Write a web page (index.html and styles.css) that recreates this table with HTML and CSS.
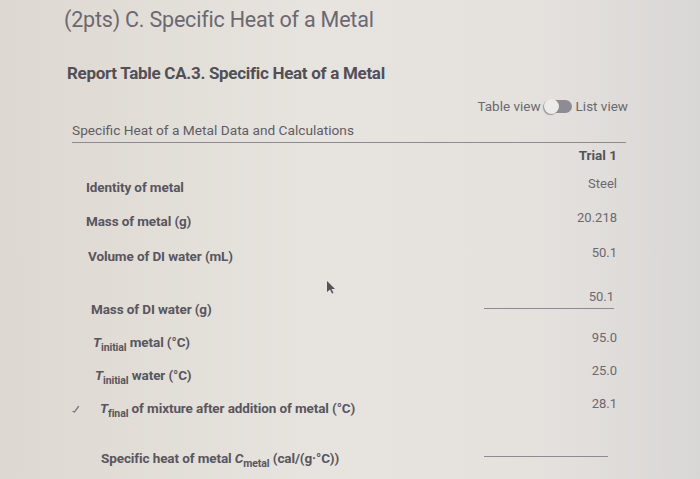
FILE: index.html
```html
<!DOCTYPE html>
<html>
<head>
<meta charset="utf-8">
<link rel="stylesheet" href="styles.css">
</head>
<body>
<div class="page">
  <h1 class="title">(2pts) C. Specific Heat of a Metal</h1>
  <h2 class="report">Report Table CA.3. Specific Heat of a Metal</h2>
  <div class="viewbar">
    <span>Table view</span>
    <span class="toggle"><span class="knob"></span></span>
    <span>List view</span>
  </div>
  <div class="section">
    <div class="caption">Specific Heat of a Metal Data and Calculations</div>
    <div class="head-row"><span class="trial">Trial 1</span></div>
    <div class="row r1"><span class="label">Identity of metal</span><span class="value">Steel</span></div>
    <div class="row r2"><span class="label">Mass of metal (g)</span><span class="value">20.218</span></div>
    <div class="row r3"><span class="label">Volume of DI water (mL)</span><span class="value">50.1</span></div>
    <div class="row r4"><span class="label">Mass of DI water (g)</span><span class="value input">50.1</span></div>
    <div class="row r5"><span class="label"><i>T</i><sub>initial</sub> metal (°C)</span><span class="value">95.0</span></div>
    <div class="row r6"><span class="label"><i>T</i><sub>initial</sub> water (°C)</span><span class="value">25.0</span></div>
    <div class="row r7"><span class="check"><svg width="8" height="8" viewBox="0 0 8 8"><path d="M1 6.5 L2.5 7 L6.5 1.5" fill="none" stroke="#7a7880" stroke-width="1.3" stroke-linecap="round"/></svg></span><span class="label"><i>T</i><sub>final</sub> of mixture after addition of metal (°C)</span><span class="value">28.1</span></div>
    <div class="row r8"><span class="label">Specific heat of metal <i>C</i><sub>metal</sub> (cal/(g·°C))</span><span class="value empty"></span></div>
  </div>
</div>
<svg class="cursor" width="12" height="14" viewBox="0 0 12 14"><path d="M2 1 L10 9 L6.5 9 L8.5 13 L7 13.5 L5 9.5 L2 12 Z" fill="#55535a"/></svg>
</body>
</html>
```

FILE: styles.css
```css
html, body {
  margin: 0;
  padding: 0;
}
body {
  width: 700px;
  height: 479px;
  overflow: hidden;
  position: relative;
  font-family: Roboto, "Liberation Sans", sans-serif;
  background: linear-gradient(90deg, #ddd8d1 0%, #e7e3de 45%, #e5e2de 75%, #d9d7d6 100%);
  color: #5c5a61;
}
.page {
  padding: 6px 0 0 64px;
}
.title {
  margin: 0;
  font-size: 21.5px;
  font-weight: 400;
  color: #6b6970;
  line-height: 28px;
  letter-spacing: -0.2px;
}
.report {
  margin: 29px 0 0 3px;
  font-size: 17px;
  font-weight: 700;
  color: #525057;
  line-height: 20px;
  letter-spacing: -0.3px;
}
.viewbar {
  display: flex;
  align-items: center;
  justify-content: flex-end;
  gap: 3px;
  width: 564px;
  margin-top: 14px;
  font-size: 13.5px;
  color: #6b6970;
  line-height: 18px;
}
.toggle {
  position: relative;
  display: inline-block;
  width: 27px;
  height: 13px;
  border-radius: 7px;
  background: #8e8c93;
  margin: 0 1px;
}
.knob {
  position: absolute;
  left: -1px;
  top: -1px;
  width: 15px;
  height: 15px;
  border-radius: 50%;
  background: #ecebe8;
  box-shadow: -1px 1px 1px rgba(0,0,0,0.35);
}
.section {
  margin-left: 8px;
  width: 554px;
}
.caption {
  margin-top: 6px;
  font-size: 13.7px;
  color: #5f5d64;
  line-height: 18px;
  padding-bottom: 3px;
  border-bottom: 1.5px solid #8d8b90;
}
.head-row {
  display: flex;
  justify-content: flex-end;
  height: 24px;
  align-items: center;
  padding-right: 9px;
}
.trial {
  font-weight: 700;
  font-size: 13.5px;
  color: #55535a;
}
.row {
  display: flex;
  align-items: center;
  height: 34px;
  padding-left: 14px;
  padding-right: 9px;
}
.r1 { margin-top: 3px; }
.r3 { height: 36px; padding-left: 16px; }
.r4 { margin-top: 18px; padding-left: 19px; height: 33px; }
.r5 { padding-left: 21px; height: 33px; }
.r6 { padding-left: 23px; height: 33px; }
.r7 { padding-left: 0; height: 33px; }
.r8 { margin-top: 17px; padding-left: 29px; }
.check {
  display: inline-block;
  width: 28px;
}
.label {
  flex: 1;
  font-weight: 700;
  font-size: 13.5px;
  color: #58565e;
  letter-spacing: -0.1px;
}
.label sub {
  font-size: 10.5px;
  vertical-align: -4px;
  line-height: 0;
}
.label i {
  font-style: italic;
}
.value {
  font-size: 13px;
  color: #6b6970;
  text-align: right;
  margin-bottom: 8px;
}
.value.input {
  width: 130px;
  padding-bottom: 4px;
  border-bottom: 1px solid #8d8b90;
  margin-bottom: 19px;
  margin-right: 3px;
}
.value.empty {
  width: 124px;
  height: 0;
  border-bottom: 1px solid #8d8b90;
  margin-bottom: 4px;
  margin-right: 9px;
}
.cursor {
  position: absolute;
  left: 325px;
  top: 280px;
}
```
